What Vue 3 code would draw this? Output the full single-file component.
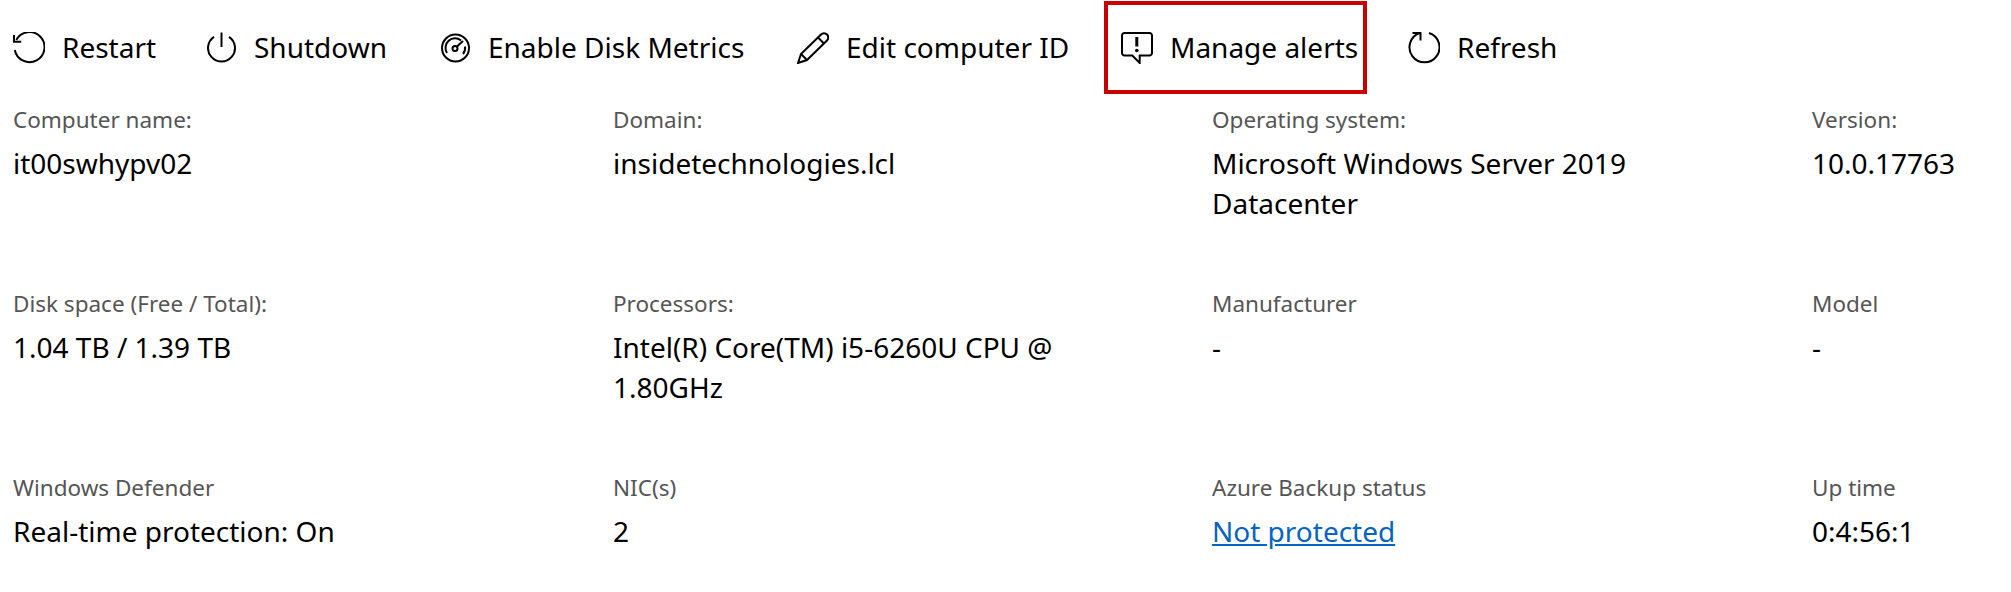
<script setup>
const actions = [
  { label: 'Restart', icon: 'restart' },
  { label: 'Shutdown', icon: 'power' },
  { label: 'Enable Disk Metrics', icon: 'gauge' },
  { label: 'Edit computer ID', icon: 'edit' },
  { label: 'Manage alerts', icon: 'alert', boxed: true },
  { label: 'Refresh', icon: 'refresh' }
]
const fields = [
  { label: 'Computer name:', value: 'it00swhypv02' },
  { label: 'Domain:', value: 'insidetechnologies.lcl' },
  { label: 'Operating system:', value: 'Microsoft Windows Server 2019 Datacenter' },
  { label: 'Version:', value: '10.0.17763' },
  { label: 'Disk space (Free / Total):', value: '1.04 TB / 1.39 TB' },
  { label: 'Processors:', value: 'Intel(R) Core(TM) i5-6260U CPU @ 1.80GHz' },
  { label: 'Manufacturer', value: '-' },
  { label: 'Model', value: '-' },
  { label: 'Windows Defender', value: 'Real-time protection: On' },
  { label: 'NIC(s)', value: '2' },
  { label: 'Azure Backup status', value: 'Not protected', link: true },
  { label: 'Up time', value: '0:4:56:1' }
]
</script>

<template>
  <div class="page">
    <div class="toolbar">
      <div v-for="a in actions" :key="a.label" class="action" :class="[a.icon, { boxed: a.boxed }]">
        <svg class="icon" viewBox="0 0 32 32" fill="none" stroke="#000" stroke-width="2">
          <template v-if="a.icon === 'restart'">
            <path d="M3.300 8A15 15 0 1 1 1.800 18" />
            <path d="M1 3V9.700H8.200" />
          </template>
          <template v-else-if="a.icon === 'power'">
            <path d="M14.500 0.500V15" />
            <path d="M7 4.800A13.500 13.500 0 1 0 22 4.800" />
          </template>
          <template v-else-if="a.icon === 'gauge'">
            <circle cx="16.500" cy="16" r="13.500" />
            <path d="M8 21A9.500 9.500 0 0 1 22 8.500" />
            <path d="M26 14.500A9.500 9.500 0 0 1 24 22" />
            <circle cx="16" cy="16.500" r="2.500" />
            <path d="M18 14.500L24 9" />
          </template>
          <template v-else-if="a.icon === 'edit'">
            <path d="M1 31L4 22L24 2.500A4 4 0 0 1 30 8.500L10 28Z" />
            <path d="M4 22L10 28M21 5.500L27 11.500" />
          </template>
          <template v-else-if="a.icon === 'alert'">
            <path d="M3.500 1H28.500A2.500 2.500 0 0 1 31 3.500V21A2.500 2.500 0 0 1 28.500 23.500H18.700V31L11.300 23.500H3.500A2.500 2.500 0 0 1 1 21V3.500A2.500 2.500 0 0 1 3.500 1Z" />
            <path d="M15.800 5V14.500" stroke-width="3" />
            <circle cx="15.800" cy="18.500" r="1.800" fill="#000" stroke="none" />
          </template>
          <template v-else>
            <path d="M21 1A15 15 0 1 1 12 1" />
            <path d="M4.500 1H12.500V8.500" />
          </template>
        </svg>
        <span class="text">{{ a.label }}</span>
      </div>
    </div>
    <div class="grid">
      <div v-for="f in fields" :key="f.label" class="field">
        <div class="label">{{ f.label }}</div>
        <div class="value" :class="{ link: f.link }">{{ f.value }}</div>
      </div>
    </div>
  </div>
</template>

<style scoped>
.page {
  width: 2011px;
  height: 592px;
  overflow: hidden;
  background: #fff;
  color: #000;
  font-family: "Noto Sans", "Open Sans", sans-serif;
}
.toolbar {
  display: flex;
  height: 102px;
  box-sizing: border-box;
  padding: 1px 0 0 13px;
  align-items: flex-start;
}
.action {
  display: flex;
  align-items: center;
  gap: 17px;
  font-size: 28px;
  color: #000;
  flex: none;
  height: 93px;
  box-sizing: border-box;
  white-space: nowrap;
}
.text {
  margin-top: -2px;
}
.icon {
  width: 32px;
  height: 32px;
  flex: none;
}
.restart { width: 194px; }
.power {
  width: 232px;
  gap: 15px;
}
.gauge { width: 358px; }
.edit { width: 307px; }
.alert {
  width: 263px;
  border: 4px solid #c90000;
  padding-left: 13px;
  margin-right: 41px;
}
.grid {
  display: grid;
  grid-template-columns: 600px 599px 600px 190px;
  grid-auto-rows: 184px;
  padding-left: 13px;
  padding-top: 2px;
}
.label {
  font-size: 22.500px;
  line-height: 32px;
  color: #555;
}
.value {
  font-size: 28px;
  line-height: 40px;
  margin-top: 7px;
  max-width: 500px;
}
.link {
  color: #0563c1;
  text-decoration: underline;
}
</style>
